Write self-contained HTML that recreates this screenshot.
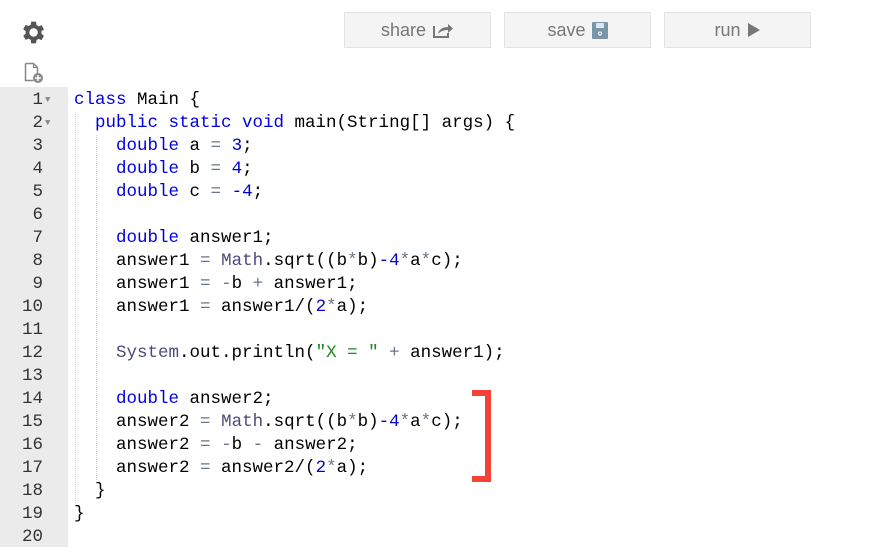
<!DOCTYPE html>
<html><head><style>
body{margin:0;width:875px;height:547px;background:#fff;position:relative;overflow:hidden;font-family:"Liberation Sans",sans-serif}
.btn{position:absolute;top:12px;width:147px;height:36px;background:#f4f4f4;border:1px solid #e2e2e2;box-sizing:border-box;color:#777;font-size:18px;display:flex;align-items:center;justify-content:center;gap:6px}
.gut{position:absolute;left:0;top:87px;width:68px;height:460px;background:#ebebeb}
.code{position:absolute;left:0;top:89px;font-family:"Liberation Mono",monospace;font-size:17.5px;line-height:23px;color:#000}
.ln{position:absolute;left:0;width:43px;text-align:right;color:#333}
.fold{position:absolute;left:45px;color:#888;font-size:9px}
.tx{position:absolute;left:74px;white-space:pre}
.k{color:#0000e6}.n{color:#0000cd}.o{color:#687687}.c{color:#4b4b7a}.s{color:#1a8a1a}
.guide{position:absolute;border-left:1px dotted #ccc}
</style></head><body>
<svg style="position:absolute;left:18px;top:18px" width="29" height="29" viewBox="0 0 24 24"><path fill="#555" d="M19.4 13a7.5 7.5 0 0 0 0-2l2.1-1.6-2-3.5-2.5 1a7.6 7.6 0 0 0-1.7-1L14.9 3h-4l-.4 2.7a7.6 7.6 0 0 0-1.700 1l-2.5-1-2 3.5L6.4 11a7.5 7.5 0 0 0 0 2l-2.1 1.6 2 3.5 2.5-1a7.6 7.6 0 0 0 1.7 1l.4 2.9h4l.4-2.7a7.6 7.6 0 0 0 1.7-1l2.5 1 2-3.5zM12.9 15.5a3.5 3.5 0 1 1 0-7 3.5 3.5 0 0 1 0 7z"/></svg>
<svg style="position:absolute;left:24px;top:62px" width="20" height="22" viewBox="0 0 20 22"><path d="M1.5 1.5h8l4 4v6M1.5 1.5v17h8" fill="none" stroke="#888" stroke-width="1.5"/><path d="M9.5 1.5v4h4" fill="none" stroke="#888" stroke-width="1.2"/><circle cx="14" cy="16" r="5" fill="#888"/><path d="M14 13v6M11 16h6" stroke="#fff" stroke-width="1.5"/></svg>
<div class="btn" style="left:344px">share <svg width="22" height="16" viewBox="0 0 22 16"><path d="M2 4v11h14v-4" fill="none" stroke="#777" stroke-width="2"/><path d="M6 12c1-5 5-7 10-7V2l5 4.5-5 4.5V8c-4 0-7 1-10 4z" fill="#777"/></svg></div>
<div class="btn" style="left:504px">save <svg width="16" height="17" viewBox="0 0 16 17"><rect width="16" height="17" rx="1" fill="#7896a8"/><rect x="4" y="1" width="8" height="5" fill="#dfe7ec"/><circle cx="8" cy="11.5" r="1.5" fill="none" stroke="#fff"/></svg></div>
<div class="btn" style="left:664px">run <svg width="14" height="16" viewBox="0 0 14 16"><path d="M1 1l12 7-12 7z" fill="#777"/></svg></div>
<div class="gut"></div>
<div class="guide" style="left:75px;top:112px;height:391px"></div>
<div class="guide" style="left:96px;top:135px;height:345px"></div>
<div class="code">
<div class="ln" style="top:0">1</div><div class="fold" style="top:0">▼</div>
<div class="ln" style="top:23px">2</div><div class="fold" style="top:23px">▼</div>
<div class="ln" style="top:46px">3</div><div class="ln" style="top:69px">4</div><div class="ln" style="top:92px">5</div><div class="ln" style="top:115px">6</div><div class="ln" style="top:138px">7</div><div class="ln" style="top:161px">8</div><div class="ln" style="top:184px">9</div><div class="ln" style="top:207px">10</div><div class="ln" style="top:230px">11</div><div class="ln" style="top:253px">12</div><div class="ln" style="top:276px">13</div><div class="ln" style="top:299px">14</div><div class="ln" style="top:322px">15</div><div class="ln" style="top:345px">16</div><div class="ln" style="top:368px">17</div><div class="ln" style="top:391px">18</div><div class="ln" style="top:414px">19</div><div class="ln" style="top:437px">20</div>
<div class="tx" style="top:0"><span class="k">class</span> Main {
  <span class="k">public static void</span> main(String[] args) {
    <span class="k">double</span> a <span class="o">=</span> <span class="n">3</span>;
    <span class="k">double</span> b <span class="o">=</span> <span class="n">4</span>;
    <span class="k">double</span> c <span class="o">=</span> <span class="n">-4</span>;

    <span class="k">double</span> answer1;
    answer1 <span class="o">=</span> <span class="c">Math</span>.sqrt((b<span class="o">*</span>b)<span class="n">-4</span><span class="o">*</span>a<span class="o">*</span>c);
    answer1 <span class="o">=</span> <span class="o">-</span>b <span class="o">+</span> answer1;
    answer1 <span class="o">=</span> answer1/(<span class="n">2</span><span class="o">*</span>a);

    <span class="c">System</span>.out.println(<span class="s">"X = "</span> <span class="o">+</span> answer1);

    <span class="k">double</span> answer2;
    answer2 <span class="o">=</span> <span class="c">Math</span>.sqrt((b<span class="o">*</span>b)<span class="n">-4</span><span class="o">*</span>a<span class="o">*</span>c);
    answer2 <span class="o">=</span> <span class="o">-</span>b <span class="o">-</span> answer2;
    answer2 <span class="o">=</span> answer2/(<span class="n">2</span><span class="o">*</span>a);
  }
}
</div></div>
<svg style="position:absolute;left:472px;top:390px" width="20" height="92"><path d="M0 3h16v86H0" fill="none" stroke="#f44336" stroke-width="6"/></svg>
</body></html>
